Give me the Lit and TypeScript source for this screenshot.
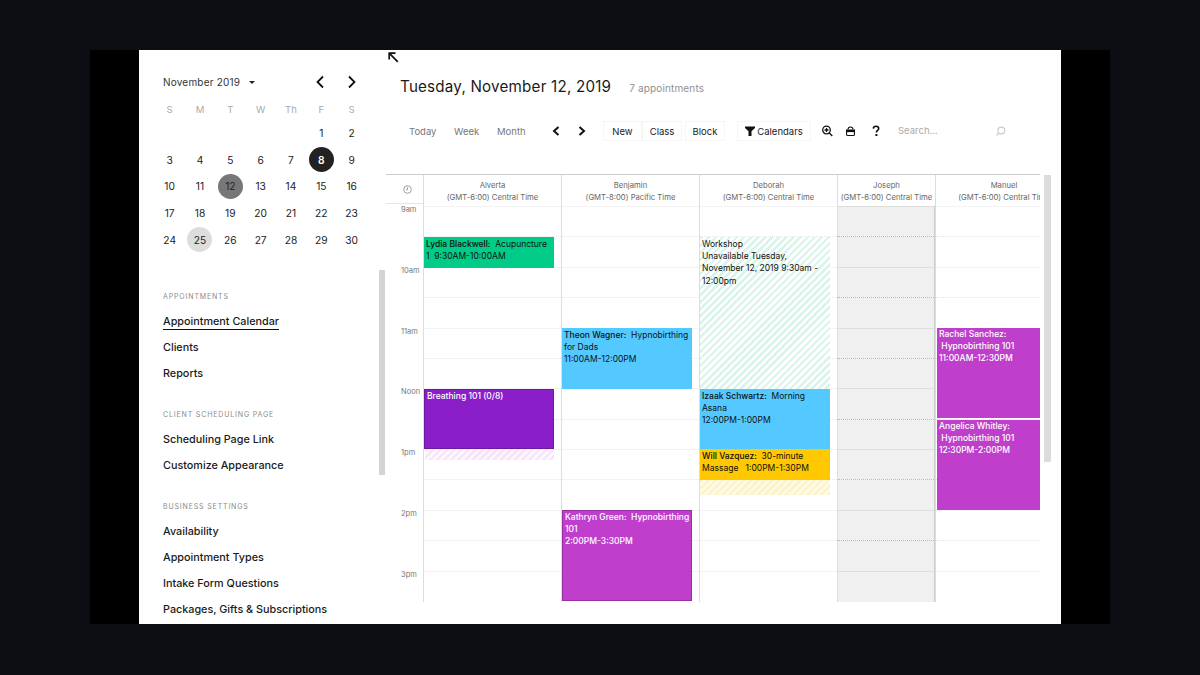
import { LitElement, html, css, svg } from "lit";
import { customElement } from "lit/decorators.js";

const HOUR = 60.75;
const NB = "\u00a0";

type Ev = { top: number; h: number; cls: string; name?: string; lines: string[] };
type Col = { name: string; tz: string; w: number; cls?: string; events: Ev[] };

const cols: Col[] = [
  { name: "Alverta", tz: "(GMT-6:00) Central Time", w: 138, events: [
    { top: 30.5, h: 31, cls: "green", name: "Lydia Blackwell:", lines: [`${NB} Acupuncture`, `1${NB} 9:30AM-10:00AM`] },
    { top: 182.5, h: 60, cls: "violet", lines: ["Breathing 101 (0/8)"] },
    { top: 243, h: 11, cls: "hatch-pink", lines: [] },
  ]},
  { name: "Benjamin", tz: "(GMT-8:00) Pacific Time", w: 138, events: [
    { top: 122, h: 61, cls: "blue", name: "Theon Wagner:", lines: [`${NB} Hypnobirthing`, "for Dads", "11:00AM-12:00PM"] },
    { top: 304, h: 91, cls: "magenta", name: "Kathryn Green:", lines: [`${NB} Hypnobirthing`, "101", "2:00PM-3:30PM"] },
  ]},
  { name: "Deborah", tz: "(GMT-6:00) Central Time", w: 138, events: [
    { top: 31, h: 151.5, cls: "hatch-mint", lines: ["Workshop", "Unavailable Tuesday,", "November 12, 2019 9:30am -", "12:00pm"] },
    { top: 182.5, h: 60, cls: "blue", name: "Izaak Schwartz:", lines: [`${NB} Morning`, "Asana", "12:00PM-1:00PM"] },
    { top: 243, h: 30.5, cls: "yellow", name: "Will Vazquez:", lines: [`${NB} 30-minute`, `Massage${NB}${NB} 1:00PM-1:30PM`] },
    { top: 273.5, h: 15, cls: "hatch-yellow", lines: [] },
  ]},
  { name: "Joseph", tz: "(GMT-6:00) Central Time", w: 98, cls: "off", events: [] },
  { name: "Manuel", tz: "(GMT-6:00) Central Time", w: 105, cls: "last", events: [
    { top: 122, h: 90, cls: "magenta wide", name: "Rachel Sanchez:", lines: ["", `${NB}Hypnobirthing 101`, "11:00AM-12:30PM"] },
    { top: 213.5, h: 90, cls: "magenta wide", name: "Angelica Whitley:", lines: ["", `${NB}Hypnobirthing 101`, "12:30PM-2:00PM"] },
  ]},
];

const hours = ["9am", "10am", "11am", "Noon", "1pm", "2pm", "3pm"];
const days: (number | null)[] = [null, null, null, null, null, ...Array.from({ length: 30 }, (_, i) => i + 1)];
const nav = [
  { title: "APPOINTMENTS", items: ["Appointment Calendar", "Clients", "Reports"] },
  { title: "CLIENT SCHEDULING PAGE", items: ["Scheduling Page Link", "Customize Appearance"] },
  { title: "BUSINESS SETTINGS", items: ["Availability", "Appointment Types", "Intake Form Questions", "Packages, Gifts & Subscriptions"] },
];

const chev = (d: string, w = 1.8) => svg`<path d=${d} fill="none" stroke="#111" stroke-width=${w} />`;

@customElement("app-root")
export class AppRoot extends LitElement {
  static styles = css`
    :host { display: block; width: 1200px; height: 675px; background: #0d0e14; overflow: hidden;
      font-family: Inter, "Liberation Sans", sans-serif; color: #1c1c1c; }
    .frame { margin: 50px 90px 0; width: 1020px; height: 574px; background: #000; padding: 0 49px; box-sizing: border-box; }
    .panel { position: relative; background: #fff; height: 574px; display: flex; overflow: hidden; }
    svg { display: block; flex: none; }

    .side { width: 247px; flex: none; padding: 0 0 0 15px; box-sizing: border-box; }
    .month { display: flex; align-items: center; height: 16px; margin: 24px 0 0 9px; font-size: 10px; letter-spacing: .2px; color: #333; white-space: nowrap; }
    .caret { width: 0; height: 0; border: 3px solid transparent; border-top: 3.5px solid #222; border-bottom: 0; margin-left: 9px; }
    .arrows { display: flex; gap: 22px; margin-left: 60px; }
    .cal { display: grid; grid-template-columns: repeat(7, 30.33px); grid-template-rows: 19.65px repeat(5, 26.7px); margin-top: 10px; margin-left: 0.5px; }
    .cal > div { display: flex; align-items: center; justify-content: center; font-size: 10.2px; color: #222; }
    .cal > .dow { color: #aaa; font-size: 9.5px; height: 18px; }
    .d { width: 25px; height: 25px; border-radius: 50%; display: flex; align-items: center; justify-content: center; }
    .d.sel { background: #222; color: #fff; font-weight: 600; }
    .d.today { background: #777; color: #222; }
    .d.mark { background: #ddd; }

    .sec { margin-left: 9px; }
    .sec h4 { margin: 0; font-weight: 400; font-size: 7px; letter-spacing: .85px; color: #8a8a8a; line-height: 9px; }
    .sec a { display: block; width: max-content; font-size: 10.8px; font-weight: 500; color: #1a1a1a; line-height: 14px; margin-top: 12px; }
    .sec h4 + a { margin-top: 14px; }
    .sec a.on { border-bottom: 1px solid #111; margin-bottom: -1px; }
    .secs { display: flex; flex-direction: column; gap: 29px; margin-top: 39px; }

    .sb1 { position: absolute; left: 240px; top: 220px; width: 6px; height: 205px; background: #d4d4d4; }

    .main { flex: none; width: 675px; display: flex; flex-direction: column; }
    .back { height: 12px; margin-top: 2px; padding-left: 2px; }
    .title { display: flex; align-items: baseline; margin: 13px 0 0 14px; height: 24px; }
    .title h1 { margin: 0; font-size: 15.2px; font-weight: 400; letter-spacing: .2px; color: #1a1a1a; white-space: nowrap; }
    .title span { margin-left: 18px; font-size: 10px; color: #8f8f8f; letter-spacing: .15px; }

    .tools { display: flex; align-items: center; margin: 20px 0 0 0; padding-left: 23px; height: 20px; font-size: 9.5px; color: #222; }
    .v { color: #777; }
    .v.a { width: 45px; }
    .v.b { width: 43px; }
    .v.c { width: 55px; }
    .nx { margin-left: 18px; }
    .t { height: 20px; display: flex; align-items: center; justify-content: center; box-sizing: border-box; border: 1px solid #f6f6f6; flex: none; }
    .t.new { margin-left: 17px; width: 39px; }
    .t.cls { width: 40px; }
    .t.blk { margin-left: 3px; width: 40px; }
    .t.cals { margin-left: 12px; width: 74px; }
    .fl { margin-right: 2px; }
    .i1 { margin-left: 10px; }
    .i2 { margin-left: 12px; margin-top: 1px; }
    .i3 { margin-left: 16px; }
    .search { margin-left: 18px; width: 97px; color: #aaa; margin-top: -1px; }

    .grid { margin-top: 33px; width: 654px; height: 428px; overflow: hidden; border-top: 1px solid #ccc; box-sizing: border-box; display: flex; }
    .tc { width: 37px; flex: none; }
    .tc .clock { height: 28px; display: flex; align-items: center; justify-content: center; padding-left: 5px; border-bottom: 1px solid #e4e4e4; }
    .tc .lbl { height: 60.75px; font-size: 7.5px; color: #777; box-sizing: border-box; padding: 1px 0 0 15px; line-height: 10px; }
    .col { flex: none; box-sizing: border-box; border-left: 1px solid #ddd; overflow: hidden; }
    .hd { height: 31px; text-align: center; font-size: 7.7px; line-height: 11.5px; color: #666; padding-top: 5px; box-sizing: border-box; white-space: nowrap; }
    .last .hd { width: 136px; }
    .off .hd { height: 32px; border-bottom: 1px solid #ddd; }
    .body { position: relative; height: 396px; }
    .off .body { background: #f0f0f0; border-right: 1px solid #ccc; margin-top: -1px; }
    .line { position: absolute; left: 0; right: 0; height: 0; border-top: 1px solid #f3f3f3; }
    .line.dot { border-top: 1px dotted #e6e6e6; }
    .off .line { border-top-color: #dcdcdc; }
    .off .line.dot { border-top: 1px dotted #bcbcbc; }

    .ev { position: absolute; left: 0; width: 130px; box-sizing: border-box; padding: 0 2px; font-size: 8.5px; line-height: 12.2px; color: #111; white-space: nowrap; }
    .ev b { font-weight: 500; }
    .green { background: #00cc88; padding-top: 1px; }
    .blue { background: #54c9ff; padding-top: 1px; }
    .yellow { background: #ffc800; padding-top: 1px; }
    .violet { background: #8a1fc9; color: #fff; border: 1px solid #6c199e; font-weight: 500; }
    .magenta { background: #bf3fcc; color: #fff; border: 1px solid #98309f; font-weight: 500; }
    .wide { width: 103px; left: 1px; border-width: 0; }
    .hatch-mint { background: repeating-linear-gradient(135deg, #dcf5ec 0 2.5px, #fff 2.5px 5px); padding-top: 1px; }
    .hatch-pink { background: repeating-linear-gradient(135deg, #f6e4fa 0 2.5px, #fdf6fe 2.5px 5px); left: 1px; width: 129px; }
    .hatch-yellow { background: repeating-linear-gradient(135deg, #fcf3c8 0 2.5px, #fefae6 2.5px 5px); }

    .sb2 { position: absolute; left: 905px; top: 125px; width: 7px; height: 287px; background: #dcdcdc; }
  `;

  render() {
    return html`<div class="frame"><div class="panel">
      <div class="side">
        <div class="month">November 2019<span class="caret"></span>
          <div class="arrows">
            <svg width="10" height="14" viewBox="0 0 10 14">${chev("M8 1.5 2.5 7 8 12.5")}</svg>
            <svg width="10" height="14" viewBox="0 0 10 14">${chev("M2 1.5 7.5 7 2 12.5")}</svg>
          </div>
        </div>
        <div class="cal">
          ${["S", "M", "T", "W", "Th", "F", "S"].map((d) => html`<div class="dow">${d}</div>`)}
          ${days.map((d) => html`<div>${d === null ? "" : html`<span class="d ${d === 8 ? "sel" : d === 12 ? "today" : d === 25 ? "mark" : ""}">${d}</span>`}</div>`)}
        </div>
        <div class="secs">
          ${nav.map((s) => html`<div class="sec"><h4>${s.title}</h4>
            ${s.items.map((i) => html`<a class=${i === "Appointment Calendar" ? "on" : ""}>${i}</a>`)}</div>`)}
        </div>
      </div>
      <div class="sb1"></div>
      <div class="main">
        <div class="back"><svg width="11" height="11" viewBox="0 0 11 11"><path d="M1.2 7.5V1.2h6.3M1.2 1.2l8.6 8.6" fill="none" stroke="#111" stroke-width="1.7"/></svg></div>
        <div class="title"><h1>Tuesday, November 12, 2019</h1><span>7 appointments</span></div>
        <div class="tools">
          <span class="v a">Today</span><span class="v b">Week</span><span class="v c">Month</span>
          <svg width="8" height="12" viewBox="0 0 8 12">${chev("M6.5 2 2 6l4.5 4", 2)}</svg>
          <svg class="nx" width="8" height="12" viewBox="0 0 8 12">${chev("M1.5 2 6 6l-4.5 4", 2)}</svg>
          <div class="t new">New</div>
          <div class="t cls">Class</div>
          <div class="t blk">Block</div>
          <div class="t cals"><svg class="fl" width="10" height="10" viewBox="0 0 10 10"><path d="M0 .5h10V2L6.5 5.3V10h-3V5.3L0 2z" fill="#111"/></svg>Calendars</div>
          <svg class="i1" width="12" height="12" viewBox="0 0 12 12"><circle cx="5.5" cy="5" r="3.8" fill="none" stroke="#111" stroke-width="1.3"/><path d="M8.3 8l3 3M5.5 3v4M3.5 5h4" stroke="#111" stroke-width="1.3" fill="none"/></svg>
          <svg class="i2" width="11" height="11" viewBox="0 0 11 11"><path d="M3 3.5C3 1.5 4 1 5.5 1S8 1.5 8 3.5" fill="none" stroke="#111" stroke-width="1.1"/><rect x="1" y="3.5" width="9" height="2.6" fill="#111"/><path d="M1.6 6v2.4c0 .8.5 1.1 1.1 1.1h5.6c.6 0 1.1-.3 1.1-1.1V6" fill="none" stroke="#111" stroke-width="1.1"/></svg>
          <svg class="i3" width="8" height="12" viewBox="0 0 8 12"><path d="M1.3 3.6C1.4 2 2.6 1.2 4 1.2c1.5 0 2.7.9 2.7 2.3 0 1.9-2.3 2-2.3 4" fill="none" stroke="#111" stroke-width="1.6"/><rect x="3.4" y="9" width="2" height="2" fill="#111"/></svg>
          <div class="search">Search...</div>
          <svg width="11" height="11" viewBox="0 0 11 11"><circle cx="6.3" cy="4.5" r="3.4" fill="none" stroke="#ccc" stroke-width="1.2"/><path d="M3.8 7 1.5 9.6" stroke="#ccc" stroke-width="1.2" fill="none"/></svg>
        </div>
        <div class="grid">
          <div class="tc">
            <div class="clock"><svg width="9" height="9" viewBox="0 0 9 9"><circle cx="4.5" cy="4.5" r="3.8" fill="none" stroke="#888" stroke-width=".8"/><path d="M4.5 2.2v2.5H3" fill="none" stroke="#888" stroke-width=".8"/></svg></div>
            ${hours.map((h) => html`<div class="lbl">${h}</div>`)}
          </div>
          ${cols.map((c) => html`<div class="col ${c.cls ?? ""}" style="width:${c.w}px">
            <div class="hd">${c.name}<br />${c.tz}</div>
            <div class="body">
              ${Array.from({ length: 13 }, (_, i) => html`<div class="line ${i % 2 ? "dot" : ""}" style="top:${((i * HOUR) / 2).toFixed(1)}px"></div>`)}
              ${c.events.map((e) => html`<div class="ev ${e.cls}" style="top:${e.top}px;height:${e.h}px">
                ${e.name ? html`<b>${e.name}</b>` : ""}${e.lines.map((l, i) => i === 0 && e.name ? html`<span>${l}</span>` : html`<div>${l}</div>`)}
              </div>`)}
            </div>
          </div>`)}
        </div>
      </div>
      <div class="sb2"></div>
    </div></div>`;
  }
}
